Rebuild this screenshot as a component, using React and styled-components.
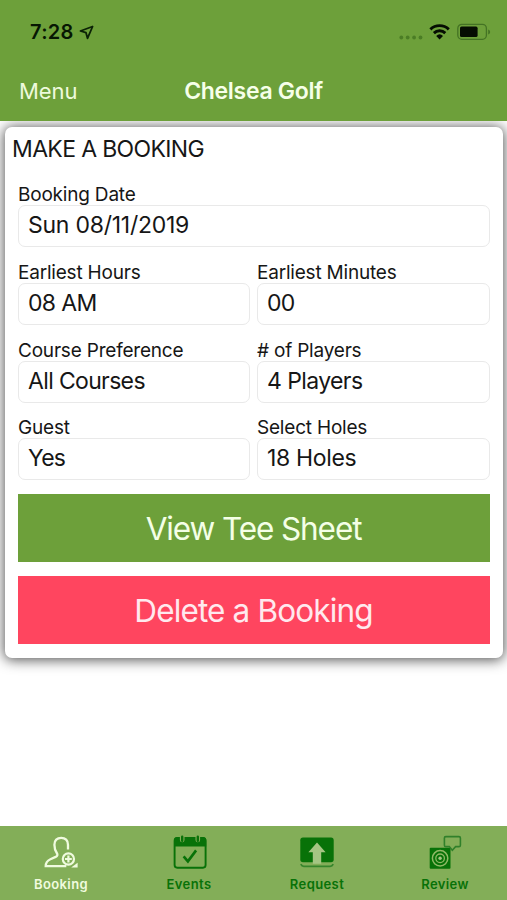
import styled, { createGlobalStyle } from "styled-components";

const GlobalStyle = createGlobalStyle`
  * {
    box-sizing: border-box;
  }
  body {
    margin: 0;
    background-color: #fff;
    font-family: Inter, "Liberation Sans", sans-serif;
    color: #161616;
    overflow: hidden;
  }
`;

const Style = {
  Screen: styled.div`
    display: flex;
    flex-direction: column;
    width: 100%;
    height: 900px;
    overflow: hidden;
  `,
  Header: styled.header`
    height: 121px;
    flex-shrink: 0;
    background-color: #6da03a;
  `,
  StatusBar: styled.div`
    display: flex;
    align-items: center;
    justify-content: space-between;
    height: 64px;
    padding: 0 16px 0 30px;
  `,
  Clock: styled.div`
    display: flex;
    align-items: center;
    gap: 5px;
    font-size: 20px;
    font-weight: 600;
    letter-spacing: 0.3px;
    color: #071703;
  `,
  NavBar: styled.div`
    display: grid;
    grid-template-columns: 1fr auto 1fr;
    align-items: center;
    height: 54px;
    padding: 0 19px;
  `,
  Menu: styled.span`
    font-size: 22px;
    letter-spacing: -0.1px;
    color: #eefadd;
  `,
  Title: styled.span`
    font-size: 23px;
    font-weight: 600;
    letter-spacing: -0.3px;
    color: #f6ffe9;
  `,
  Main: styled.main`
    flex: 1;
    padding: 6px 4px 0 5px;
    overflow: hidden;
  `,
  Card: styled.section`
    height: 530.5px;
    padding: 0 13px;
    border-radius: 7px;
    background-color: #fff;
    box-shadow: 0 1px 13px 1px rgba(0, 0, 0, 0.68);
  `,
  Heading: styled.h1`
    margin: 0 -6px;
    height: 56px;
    padding-top: 8px;
    font-size: 23px;
    line-height: 28px;
    font-weight: 400;
    letter-spacing: -0.65px;
  `,
  Form: styled.div`
    display: grid;
    grid-template-columns: 232px 1fr;
    column-gap: 7px;
    height: 310.5px;
  `,
  Field: styled.label`
    display: block;
    height: 77.8px;
    grid-column: ${(props) => (props.$wide ? "span 2" : "auto")};
  `,
  Label: styled.span`
    display: block;
    height: 22px;
    font-size: 19px;
    line-height: 23px;
    white-space: nowrap;
    letter-spacing: -0.2px;
  `,
  Value: styled.div`
    height: 42px;
    padding-left: 9px;
    border: 1px solid #e9e9e9;
    border-radius: 7px;
    font-size: 23px;
    line-height: 39px;
    white-space: nowrap;
    letter-spacing: ${(props) => props.$spacing}px;
  `,
  Button: styled.button`
    display: block;
    width: 100%;
    height: 68.5px;
    margin: 0 0 13.5px;
    padding: 2px 1px 0 0;
    border: none;
    background-color: ${(props) => (props.$danger ? "#ff455f" : "#6da03a")};
    color: ${(props) => (props.$danger ? "#ffe9ee" : "#f4ffe6")};
    font-family: inherit;
    font-size: 31.5px;
    font-weight: 400;
    letter-spacing: ${(props) => props.$spacing}px;
  `,
  TabBar: styled.nav`
    display: flex;
    flex-shrink: 0;
    height: 74px;
    margin-left: -3px;
    background-color: #83ae58;
  `,
  Tab: styled.div`
    display: flex;
    flex: 0 0 128px;
    flex-direction: column;
    align-items: center;
    padding-top: 8px;
    color: ${(props) => (props.$active ? "#f0fbdf" : "#087208")};
  `,
  TabText: styled.span`
    font-size: 13px;
    line-height: 16px;
    margin-top: 6px;
    font-weight: 600;
    letter-spacing: 0.4px;
  `,
};

const fields = [
  { label: "Booking Date", value: "Sun 08/11/2019", spacing: -0.25, wide: true },
  { label: "Earliest Hours", value: "08 AM", spacing: -0.65 },
  { label: "Earliest Minutes", value: "00", spacing: -0.8 },
  { label: "Course Preference", value: "All Courses", spacing: -0.65 },
  { label: "# of Players", value: "4 Players", spacing: -0.6 },
  { label: "Guest", value: "Yes", spacing: -0.7 },
  { label: "Select Holes", value: "18 Holes", spacing: -0.35 },
];

function LocationIcon() {
  return (
    <svg width="16" height="15" viewBox="0 0 16 15" fill="none">
      <path
        d="M13.6 1.5 1.4 6 7 7.7 8.5 13.3Z"
        stroke="#0b2206"
        strokeWidth="1.8"
        strokeLinejoin="round"
      />
    </svg>
  );
}

function StatusIcons() {
  return (
    <svg width="92" height="18" viewBox="0 0 92 18" fill="none">
      <g fill="#4b7d25">
        <circle cx="2.3" cy="14.5" r="1.9" />
        <circle cx="8.7" cy="14.5" r="1.9" />
        <circle cx="15.1" cy="14.5" r="1.9" />
        <circle cx="21.5" cy="14.5" r="1.9" />
      </g>
      <g stroke="#050d02" strokeWidth="2.9">
        <path d="M31.4 6.4a13.2 13.2 0 0 1 18.4 0" />
        <path d="M34.9 10.1a8.2 8.2 0 0 1 11.4 0" />
      </g>
      <path d="M37.2 12.9a5 5 0 0 1 6.8 0L40.6 16.4Z" fill="#050d02" />
      <rect x="58.8" y="1.4" width="28.6" height="14.9" rx="4" stroke="#447324" strokeWidth="1.3" />
      <rect x="61" y="3.6" width="17.6" height="10.4" rx="1.6" fill="#050d02" />
      <path d="M89.2 6.4c2.6 1 2.6 4 0 5Z" fill="#447324" />
    </svg>
  );
}

function BookingIcon() {
  return (
    <svg width="36" height="36" viewBox="0 0 36 36" fill="none" stroke="currentColor">
      <path
        d="M25 15.6v-4.800c0-4.400-2.600-7-6.800-7s-6.800 2.600-6.800 7c0 4.600 1 6.200 2.400 8.200 1.200 1.800.6 3-1.200 3.900l-5.200 2.300c-3.400 1.500-4.700 3.500-4.700 7h20.600"
        strokeWidth="2.3"
      />
      <circle cx="25.4" cy="25" r="5.6" strokeWidth="2.2" />
      <path d="M25.4 21.6v6.8M22 25h6.8" strokeWidth="2.2" />
      <path d="M34.6 28.8v4.7h-6.4Z" fill="currentColor" stroke="none" />
    </svg>
  );
}

function EventsIcon() {
  return (
    <svg width="36" height="36" viewBox="0 0 36 36" fill="none">
      <rect x="3.6" y="4.2" width="31" height="29.5" rx="2.6" stroke="currentColor" strokeWidth="1.9" />
      <path d="M3 12.6V6a3 3 0 0 1 3-3h26.2a3 3 0 0 1 3 3v6.6Z" fill="currentColor" />
      <g stroke="#83ae58" strokeWidth="4.6" strokeLinecap="round">
        <path d="M11.2 2v4M26.8 2v4" />
      </g>
      <g stroke="currentColor" strokeWidth="2.4" strokeLinecap="round">
        <path d="M11.2 2.8v4M26.8 2.8v4" />
      </g>
      <path d="m12.6 22.4 4.3 5 8.2-11" stroke="currentColor" strokeWidth="2.6" />
    </svg>
  );
}

function RequestIcon() {
  return (
    <svg width="36" height="36" viewBox="0 0 36 36" fill="none">
      <rect x="1.3" y="3.6" width="33.4" height="24.6" rx="2.7" fill="currentColor" />
      <path d="M1.8 30.2c.8 1.6 1.6 2.1 3 2.1h26.4c1.4 0 2.2-.5 3-2.1" stroke="#37862c" strokeWidth="1.8" />
      <path d="M18 8.6 26.6 18.2h-4.4V29.8h-8.4V18.2H9.4Z" fill="#a5c583" />
    </svg>
  );
}

function ReviewIcon() {
  return (
    <svg width="36" height="36" viewBox="0 0 36 36" fill="none">
      <rect x="2.7" y="13.8" width="20.8" height="20.9" rx="1" fill="currentColor" />
      <g stroke="#8fb965">
        <circle cx="13.1" cy="24.3" r="7.7" strokeWidth="1.5" />
        <circle cx="13.1" cy="24.3" r="4.3" strokeWidth="1.3" />
      </g>
      <circle cx="13.1" cy="24.3" r="1.7" fill="#a5c583" />
      <path
        d="M18.800 2.600H32a1.400 1.400 0 0 1 1.400 1.400v7.200a1.400 1.400 0 0 1-1.400 1.400h-3.400l-3.300 3.600-3-3.600h-3.500a1.400 1.400 0 0 1-1.400-1.400V4a1.400 1.400 0 0 1 1.400-1.400Z"
        stroke="#30802a"
        strokeWidth="1.6"
      />
    </svg>
  );
}

const tabs = [
  { text: "Booking", Icon: BookingIcon, active: true },
  { text: "Events", Icon: EventsIcon },
  { text: "Request", Icon: RequestIcon },
  { text: "Review", Icon: ReviewIcon },
];

function Field({ label, value, spacing, wide }) {
  return (
    <Style.Field $wide={wide}>
      <Style.Label>{label}</Style.Label>
      <Style.Value $spacing={spacing}>{value}</Style.Value>
    </Style.Field>
  );
}

function App() {
  return (
    <Style.Screen>
      <GlobalStyle />
      <Style.Header>
        <Style.StatusBar>
          <Style.Clock>
            <span>7:28</span>
            <LocationIcon />
          </Style.Clock>
          <StatusIcons />
        </Style.StatusBar>
        <Style.NavBar>
          <Style.Menu>Menu</Style.Menu>
          <Style.Title>Chelsea Golf</Style.Title>
        </Style.NavBar>
      </Style.Header>
      <Style.Main>
        <Style.Card>
          <Style.Heading>MAKE A BOOKING</Style.Heading>
          <Style.Form>
            {fields.map((field) => (
              <Field key={field.label} {...field} />
            ))}
          </Style.Form>
          <Style.Button $spacing={-1.1}>View Tee Sheet</Style.Button>
          <Style.Button $danger $spacing={-0.85}>
            Delete a Booking
          </Style.Button>
        </Style.Card>
      </Style.Main>
      <Style.TabBar>
        {tabs.map(({ text, Icon, active }) => (
          <Style.Tab key={text} $active={active}>
            <Icon />
            <Style.TabText>{text}</Style.TabText>
          </Style.Tab>
        ))}
      </Style.TabBar>
    </Style.Screen>
  );
}

export default App;
